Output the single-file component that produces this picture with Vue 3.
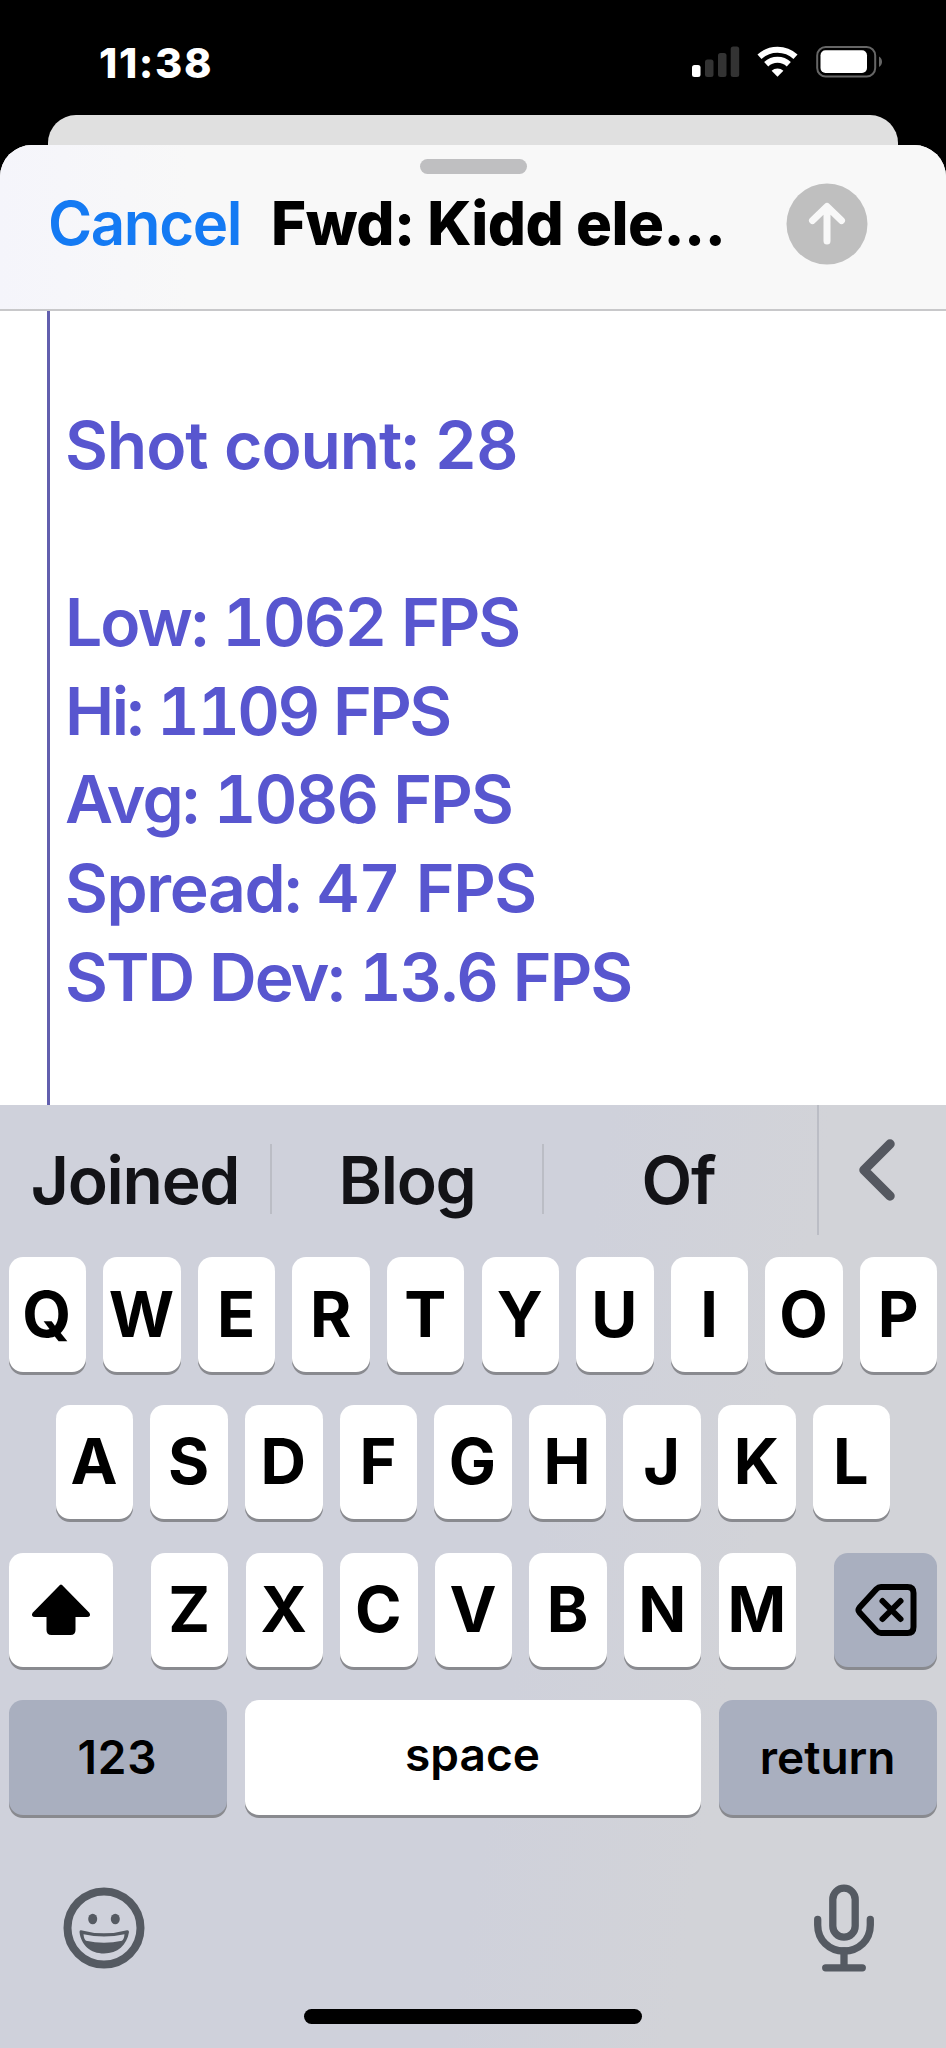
<template>
  <div class="phone">
    <div class="status">
      <span class="time">11:38</span>
      <svg class="status-icons" width="196" height="40" viewBox="690 44 196 40">
        <rect x="692" y="66" width="8.5" height="12" rx="2.5" fill="#fff" />
        <rect x="705" y="60.5" width="8.5" height="17.5" rx="2.5" fill="#333" />
        <rect x="718" y="54" width="8.5" height="24" rx="2.5" fill="#333" />
        <rect x="730.7" y="47.5" width="8.5" height="30.5" rx="2.5" fill="#333" />
        <g fill="none" stroke="#fff" stroke-width="6">
          <path d="M759.5 57.8a26.600 26.600 0 0 1 36 0" />
          <path d="M766.2 65.3a16.500 16.500 0 0 1 22.600 0" />
        </g>
        <path d="M777.5 77.8L771.6 71.8a8.600 8.600 0 0 1 11.800 0z" fill="#fff" />
        <rect x="817.2" y="48" width="58" height="29.5" rx="8.5" fill="none" stroke="#666" stroke-width="2" />
        <rect x="820.5" y="51.2" width="46.5" height="22.8" rx="5" fill="#fff" />
        <path d="M879 57.5c4 2 4 8.500 0 10.500z" fill="#666" />
      </svg>
    </div>

    <div class="back-sheet"></div>

    <div class="sheet">
      <header class="header">
        <div class="grabber"></div>
        <div class="bar">
          <span class="cancel">Cancel</span>
          <span class="title">Fwd: Kidd ele...</span>
          <svg class="send" width="82" height="82" viewBox="0 0 82 82">
            <circle cx="41" cy="41" r="40.5" fill="#bfbfbf" />
            <path
              d="M41 58V24M26.500 37.500L41 23.500L55.500 37.500"
              fill="none"
              stroke="#f8f8f8"
              stroke-width="7"
              stroke-linecap="round"
              stroke-linejoin="round"
            />
          </svg>
        </div>
      </header>

      <main class="message">
        <div class="quote">
          <p
            v-for="(line, i) in lines"
            :key="i"
            :style="{ letterSpacing: line.tracking + 'px' }"
          >
            {{ line.text }}
          </p>
        </div>
      </main>
    </div>

    <div class="keyboard">
      <div class="suggestions">
        <div v-for="word in suggestions" :key="word" class="suggestion">
          <span>{{ word }}</span>
        </div>
        <div class="collapse">
          <svg width="40" height="66" viewBox="0 0 40 66">
            <path
              d="M33 7L7 33L33 59"
              fill="none"
              stroke="#555860"
              stroke-width="9.5"
              stroke-linecap="round"
              stroke-linejoin="round"
            />
          </svg>
        </div>
      </div>

      <div class="row">
        <div v-for="k in rows[0]" :key="k" class="key">{{ k }}</div>
      </div>
      <div class="row">
        <div v-for="k in rows[1]" :key="k" class="key">{{ k }}</div>
      </div>
      <div class="row spread">
        <div class="key shift">
          <svg width="62" height="54" viewBox="0 0 62 54">
            <path
              d="M31 3L58 30.500Q59.500 32.500 57 32.500H44V47Q44 50.500 40.500 50.500H21.500Q18 50.500 18 47V32.500H5Q2.500 32.500 4 30.500Z"
              stroke="#000"
              stroke-width="3"
              stroke-linejoin="round"
            />
          </svg>
        </div>
        <div class="letters">
          <div v-for="k in rows[2]" :key="k" class="key">{{ k }}</div>
        </div>
        <div class="key dark delete">
          <svg width="64" height="54" viewBox="0 0 64 54">
            <g fill="none" stroke="#000" stroke-linecap="round" stroke-linejoin="round">
              <path
                d="M27 4H53.500Q59.500 4 59.500 10V44Q59.500 50 53.500 50H27Q24.500 50 22.500 48L5.500 29.500Q3.500 27 5.500 24.500L22.500 6Q24.500 4 27 4Z"
                stroke-width="6"
              />
              <path d="M27.500 18L45.500 36M45.500 18L27.500 36" transform="translate(1)" stroke-width="6" />
            </g>
          </svg>
        </div>
      </div>
      <div class="row spread">
        <div class="key dark wide"><span class="numbers">123</span></div>
        <div class="key space"><span>space</span></div>
        <div class="key dark wide"><span>return</span></div>
      </div>

      <div class="tools">
        <svg width="82" height="82" viewBox="0 0 82 82">
          <circle cx="41" cy="41" r="36.5" fill="none" stroke="#555a62" stroke-width="8" />
          <ellipse cx="29.7" cy="32" rx="4.5" ry="5.3" fill="#555a62" />
          <ellipse cx="52.3" cy="32" rx="4.5" ry="5.3" fill="#555a62" />
          <path
            d="M18 43.200Q41 49.500 64 43.200Q66 42.800 66 45C64 58 54.500 66.500 41 66.500S18 58 16.500 45Q16.500 42.800 18 43.200Z"
            fill="#555a62"
          />
          <path d="M20.500 47.300Q41 51.800 61.500 47.300Q61 52.500 59 53.800Q41 57.500 23 53.800Q21 52.500 20.500 47.300Z" fill="#d0d2dc" />
        </svg>
        <svg width="62" height="90" viewBox="0 0 62 90">
          <g fill="none" stroke="#555a62" stroke-width="7.3" stroke-linecap="round">
            <rect x="19.8" y="5.2" width="22.4" height="49" rx="11.2" />
            <path d="M4.700 36.500V42C4.700 57 16 68 31 68S57.300 57 57.300 42V36.500" />
            <path d="M31 68V84M12.700 84.800H49.300" />
          </g>
        </svg>
      </div>
      <div class="home"></div>
    </div>
  </div>
</template>

<script setup>
const lines = [
  { text: "Shot count: 28", tracking: -1.1 },
  { text: "", tracking: 0 },
  { text: "Low: 1062 FPS", tracking: -2 },
  { text: "Hi: 1109 FPS", tracking: -2.5 },
  { text: "Avg: 1086 FPS", tracking: -1.8 },
  { text: "Spread: 47 FPS", tracking: -1.4 },
  { text: "STD Dev: 13.6 FPS", tracking: -1.95 },
]
const suggestions = ["Joined", "Blog", "Of"]
const rows = ["QWERTYUIOP", "ASDFGHJKL", "ZXCVBNM"].map((r) => r.split(""))
</script>

<style>
body {
  margin: 0;
  background: #000;
}
</style>

<style scoped>
.phone {
  width: 946px;
  height: 2048px;
  display: flex;
  flex-direction: column;
  overflow: hidden;
  background: #000;
  font-family: Inter, "Liberation Sans", sans-serif;
}
.status {
  height: 115px;
  box-sizing: border-box;
  padding: 43px 60px 32px 99px;
  display: flex;
  justify-content: space-between;
  align-items: center;
}
.time {
  color: #fff;
  font-size: 41.5px;
  font-weight: 780;
  letter-spacing: 1.6px;
}
.back-sheet {
  height: 30px;
  margin: 0 48px;
  background: #e0e0e0;
  border-radius: 28px 28px 0 0;
}
.sheet {
  height: 960px;
  display: flex;
  flex-direction: column;
  background: #fff;
  border-radius: 32px 32px 0 0;
  overflow: hidden;
}
.header {
  height: 166px;
  box-sizing: border-box;
  padding-top: 14px;
  background: linear-gradient(90deg, #f5f5fb, #f8f8f8 20%);
  border-bottom: 2px solid #c8c8ca;
}
.grabber {
  width: 107px;
  height: 15px;
  margin: 0 auto;
  border-radius: 8px;
  background: #bfbfc1;
}
.bar {
  height: 82px;
  margin: 9px 78px 0 48px;
  display: flex;
  align-items: center;
}
.cancel,
.title {
  position: relative;
  top: -1px;
}
.cancel {
  width: 223px;
  color: #147af3;
  font-size: 60px;
  font-weight: 590;
  letter-spacing: -1.4px;
}
.title {
  flex: 1;
  font-size: 60px;
  font-weight: 790;
  letter-spacing: -0.5px;
  white-space: nowrap;
}
.message {
  flex: 1;
  display: flex;
  padding-left: 47px;
}
.quote {
  flex: 1;
  padding: 90px 0 0 15px;
  border-left: 3px solid #625fae;
  color: #5856cf;
  font-size: 66px;
  font-weight: 600;
  font-variant-numeric: tabular-nums;
}
.quote p {
  height: 88.6px;
  margin: 0;
  line-height: 88.6px;
  white-space: nowrap;
}
.keyboard {
  flex: 1;
  background: linear-gradient(100deg, #cfd1db 55%, #d2d3d8 75%);
}
.suggestions {
  height: 152px;
  display: flex;
}
.suggestion {
  width: 272px;
  height: 70px;
  margin-top: 39px;
  box-sizing: border-box;
  display: flex;
  align-items: center;
  justify-content: center;
  border-right: 2px solid #bbbdc5;
  color: #131317;
  font-size: 66px;
  font-weight: 600;
  letter-spacing: -1.3px;
}
.suggestion:nth-child(3) {
  width: 273px;
  border-right: 0;
  padding-right: 4px;
}
.suggestion span {
  position: relative;
  top: 1px;
}
.collapse {
  flex: 1;
  height: 130px;
  display: flex;
  align-items: center;
  justify-content: center;
  border-left: 2px solid #bbbdc5;
  padding-right: 12px;
}
.row {
  display: flex;
  justify-content: center;
  gap: 17.1px;
  margin: 0 8.7px 33.3px;
}
.spread {
  justify-content: space-between;
}
.letters {
  display: flex;
  gap: 17.1px;
}
.key {
  width: 77.5px;
  height: 114.5px;
  box-sizing: border-box;
  padding: 0 1px 1.5px 0;
  flex: none;
  display: flex;
  align-items: center;
  justify-content: center;
  border-radius: 14px;
  background: #fff;
  box-shadow: 0 3px 0 #898a8f;
  color: #000;
  font-size: 63px;
  font-weight: 690;
}
.dark {
  background: #a9afbf;
}
.shift {
  width: 104.5px;
  padding: 0 0 0 1px;
}
.delete {
  width: 103.5px;
  padding: 0 0 0 1px;
}
.wide,
.space {
  font-size: 46px;
  font-weight: 600;
}
.wide {
  width: 218.5px;
}
.numbers {
  letter-spacing: 0.8px;
}
.space {
  width: 456px;
}
.space span {
  margin-top: -6px;
}
.tools {
  display: flex;
  justify-content: space-between;
  align-items: center;
  margin: 68px 71px 0 62.5px;
  height: 90px;
}
.home {
  width: 338px;
  height: 15px;
  margin: 36px auto 0;
  border-radius: 8px;
  background: #000;
}
</style>
